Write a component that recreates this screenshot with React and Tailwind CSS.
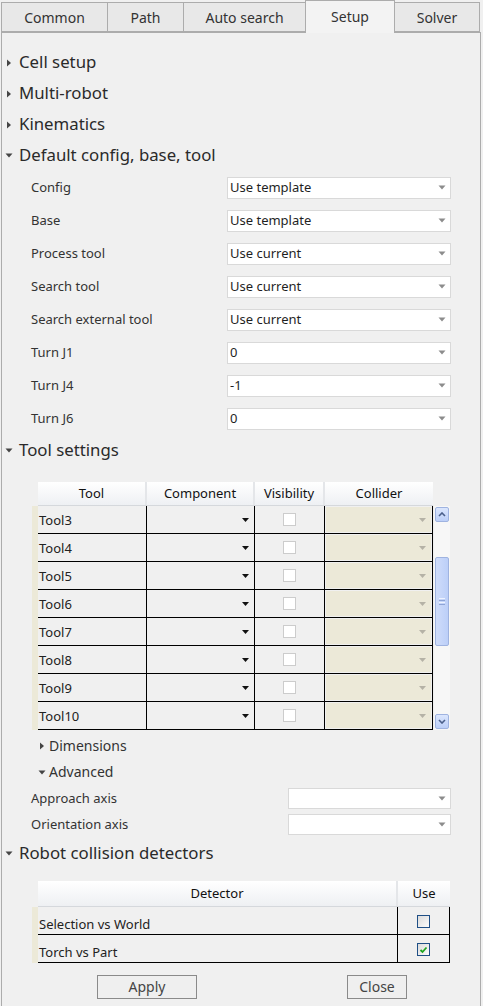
import React from "react";

function Tri({ open, color = "#444" }) {
  return open ? (
    <svg width="8" height="7" viewBox="0 0 8 7" className="shrink-0">
      <polygon points="0.5,1.5 7.5,1.5 4,5.5" fill={color} />
    </svg>
  ) : (
    <svg width="8" height="8" viewBox="0 0 8 8" className="shrink-0">
      <polygon points="2,0.5 6,4 2,7.5" fill={color} />
    </svg>
  );
}

function DownArrow({ color = "#8c8c8c" }) {
  return (
    <svg width="8" height="5" viewBox="0 0 8 5" className="shrink-0">
      <polygon points="0.5,0.5 7.5,0.5 4,4.5" fill={color} />
    </svg>
  );
}

function Header({ label, open }) {
  return (
    <div className="h-[31px] flex items-center pl-[3px]">
      <Tri open={open} />
      <span className="ml-[6px] text-[16.8px] text-[#2a2a2a] leading-none">{label}</span>
    </div>
  );
}

function Combo({ value, w, h = "h-[22px]" }) {
  return (
    <div className={`${w} ${h} bg-white border border-[#d9d9d9] flex items-center justify-between pl-[2px] pr-[4px]`}>
      <span className="text-[13px] text-[#1f1f1f] leading-none">{value}</span>
      <DownArrow />
    </div>
  );
}

function FormRow({ label, value }) {
  return (
    <div className="h-[33px] flex items-center pl-[29px]">
      <span className="w-[196px] text-[13px] text-[#333] leading-none">{label}</span>
      <Combo value={value} w="w-[224px]" />
    </div>
  );
}

function Check() {
  return <div className="w-[13px] h-[13px] border border-[#cccccc] bg-white" />;
}

function ToolRow({ name }) {
  return (
    <div className="h-[28px] flex">
      <div className="w-[6px] bg-[#ece9d8]" />
      <div className="flex flex-1 border-b border-black">
        <div className="w-[109px] border-r border-black flex items-center pl-[1px] pt-[1px] text-[13px] text-[#222] leading-none">
          {name}
        </div>
        <div className="w-[108px] border-r border-black flex items-center justify-end pr-[5px]">
          <svg width="7" height="4" viewBox="0 0 7 4">
            <polygon points="0,0 7,0 3.5,4" fill="#111" />
          </svg>
        </div>
        <div className="w-[70px] border-r border-black flex items-center justify-center">
          <Check />
        </div>
        <div className="w-[108px] border-r border-black p-[1px]">
          <div className="h-full bg-[#ece9d8] flex items-center justify-end pr-[5px]">
            <svg width="7" height="4" viewBox="0 0 7 4">
              <polygon points="0,0 7,0 3.5,4" fill="#b5b2a6" />
            </svg>
          </div>
        </div>
      </div>
    </div>
  );
}

function HeadCell({ w, children, last }) {
  return (
    <div
      className={`${w} h-full flex items-center justify-center text-[13px] text-[#111] leading-none ${
        last ? "" : "border-r-2 border-[#e4e6e9]"
      }`}
    >
      {children}
    </div>
  );
}

function ScrollBar() {
  return (
    <div className="w-[16px] h-[224px] bg-[#f7f7f7] flex flex-col items-center py-[1px]">
      <div className="w-[14px] h-[15px] rounded-[2px] border border-[#9fb3e0] bg-gradient-to-b from-[#dbe6fd] to-[#bccff8] flex items-center justify-center">
        <svg width="8" height="5" viewBox="0 0 8 5">
          <path d="M1 4 L4 1 L7 4" stroke="#4a5f8a" strokeWidth="1.6" fill="none" />
        </svg>
      </div>
      <div className="h-[35px]" />
      <div className="w-[14px] h-[89px] rounded-[2px] border border-[#9fb3e0] bg-gradient-to-r from-[#cfdcfa] to-[#bccff8] flex flex-col items-center justify-center gap-[1px]">
        <div className="w-[6px] h-px bg-[#eef3ff]" />
        <div className="w-[6px] h-px bg-[#8ea4d6]" />
        <div className="w-[6px] h-px bg-[#eef3ff]" />
        <div className="w-[6px] h-px bg-[#8ea4d6]" />
      </div>
      <div className="flex-1" />
      <div className="w-[14px] h-[15px] rounded-[2px] border border-[#9fb3e0] bg-gradient-to-b from-[#dbe6fd] to-[#bccff8] flex items-center justify-center">
        <svg width="8" height="5" viewBox="0 0 8 5">
          <path d="M1 1 L4 4 L7 1" stroke="#4a5f8a" strokeWidth="1.6" fill="none" />
        </svg>
      </div>
    </div>
  );
}

function UseCheck({ checked }) {
  return (
    <div className="w-[13px] h-[13px] border border-[#1f4f86] bg-gradient-to-br from-[#dcdcdc] to-[#fbfbfb] flex items-center justify-center">
      {checked && (
        <svg width="9" height="8" viewBox="0 0 9 8">
          <path d="M1.5 4 L3.5 6 L7.5 1.5" stroke="#1fa61f" strokeWidth="1.8" fill="none" />
        </svg>
      )}
    </div>
  );
}

function DetRow({ name, checked }) {
  return (
    <div className="h-[28px] flex">
      <div className="w-[6px] bg-[#ece9d8]" />
      <div className="flex flex-1 border-b border-black">
        <div className="w-[360px] border-r border-black flex items-end pb-[3px] pl-[1px] text-[13px] text-[#222] leading-none">
          {name}
        </div>
        <div className="w-[52px] border-r border-black flex items-center justify-center pt-[2px]">
          <UseCheck checked={checked} />
        </div>
      </div>
    </div>
  );
}

function Tab({ label, w, selected }) {
  return selected ? (
    <div className={`${w} h-[33px] -mb-px relative z-10 bg-[#f3f3f3] border border-b-0 border-[#acacac] flex items-center justify-center pb-[2px] text-[14px] text-[#333]`}>
      {label}
    </div>
  ) : (
    <div className={`${w} h-[30px] bg-[#e8e8e8] border border-[#acacac] -ml-px first:ml-0 flex items-center justify-center text-[14px] text-[#333]`}>
      {label}
    </div>
  );
}

export default function App() {
  const tools = ["Tool3", "Tool4", "Tool5", "Tool6", "Tool7", "Tool8", "Tool9", "Tool10"];
  return (
    <div className="w-[483px] h-[1006px] bg-[#f0f0f0] overflow-hidden font-['Noto_Sans','Open_Sans',sans-serif]">
      <div className="flex items-end h-[32px] pl-[1px]">
        <Tab label="Common" w="w-[107px]" />
        <Tab label="Path" w="w-[77px]" />
        <Tab label="Auto search" w="w-[123px]" />
        <div className="-ml-px">
          <Tab label="Setup" w="w-[90px]" selected />
        </div>
        <div className="-ml-px">
          <Tab label="Solver" w="w-[86px]" />
        </div>
      </div>
      <div className="ml-[1px] w-[480px] h-[974px] border-l border-r border-t border-[#acacac]">
        <div className="pt-[14px]">
          <Header label="Cell setup" />
          <Header label="Multi-robot" />
          <Header label="Kinematics" />
          <Header label="Default config, base, tool" open />
          <FormRow label="Config" value="Use template" />
          <FormRow label="Base" value="Use template" />
          <FormRow label="Process tool" value="Use current" />
          <FormRow label="Search tool" value="Use current" />
          <FormRow label="Search external tool" value="Use current" />
          <FormRow label="Turn J1" value="0" />
          <FormRow label="Turn J4" value="-1" />
          <FormRow label="Turn J6" value="0" />
          <Header label="Tool settings" open />

          <div className="mt-[16px] ml-[30px] flex">
            <div className="w-[401px]">
              <div className="h-[24px] ml-[6px] flex bg-gradient-to-b from-[#ffffff] to-[#eef0f3] border-b border-[#d5d8dc]">
                <HeadCell w="w-[109px]">Tool</HeadCell>
                <HeadCell w="w-[108px]">Component</HeadCell>
                <HeadCell w="w-[70px]">Visibility</HeadCell>
                <HeadCell w="w-[108px]" last>Collider</HeadCell>
              </div>
              {tools.map((t) => (
                <ToolRow key={t} name={t} />
              ))}
            </div>
            <div className="ml-[1px] pt-[24px]">
              <ScrollBar />
            </div>
          </div>

          <div className="mt-[3px] pl-[36px]">
            <div className="h-[26px] flex items-center">
              <Tri />
              <span className="ml-[3px] text-[14px] text-[#333] leading-none">Dimensions</span>
            </div>
            <div className="h-[26px] flex items-center">
              <Tri open />
              <span className="ml-[3px] text-[14px] text-[#333] leading-none">Advanced</span>
            </div>
          </div>
          <div className="h-[26px] flex items-center pl-[29px]">
            <span className="w-[257px] text-[13px] text-[#333] leading-none">Approach axis</span>
            <Combo value="" w="w-[163px]" h="h-[21px]" />
          </div>
          <div className="h-[26px] flex items-center pl-[29px]">
            <span className="w-[257px] text-[13px] text-[#333] leading-none">Orientation axis</span>
            <Combo value="" w="w-[163px]" h="h-[21px]" />
          </div>
          <div className="mt-[1px]">
            <Header label="Robot collision detectors" open />
          </div>

          <div className="mt-[12px] ml-[30px] w-[418px]">
            <div className="h-[26px] ml-[6px] flex bg-gradient-to-b from-[#ffffff] to-[#eef0f3] border-b border-[#d5d8dc]">
              <HeadCell w="w-[360px]">Detector</HeadCell>
              <HeadCell w="w-[52px]" last>Use</HeadCell>
            </div>
            <DetRow name="Selection vs World" />
            <DetRow name="Torch vs Part" checked />
          </div>

          <div className="mt-[12px] flex pl-[95px]">
            <div className="w-[100px] h-[24px] border border-[#8a8a8a] bg-[#efefef] flex items-center justify-center text-[14px] text-[#444] leading-none">
              Apply
            </div>
            <div className="ml-[150px] w-[60px] h-[24px] border border-[#8a8a8a] bg-[#efefef] flex items-center justify-center text-[14px] text-[#444] leading-none">
              Close
            </div>
          </div>
        </div>
      </div>
    </div>
  );
}
